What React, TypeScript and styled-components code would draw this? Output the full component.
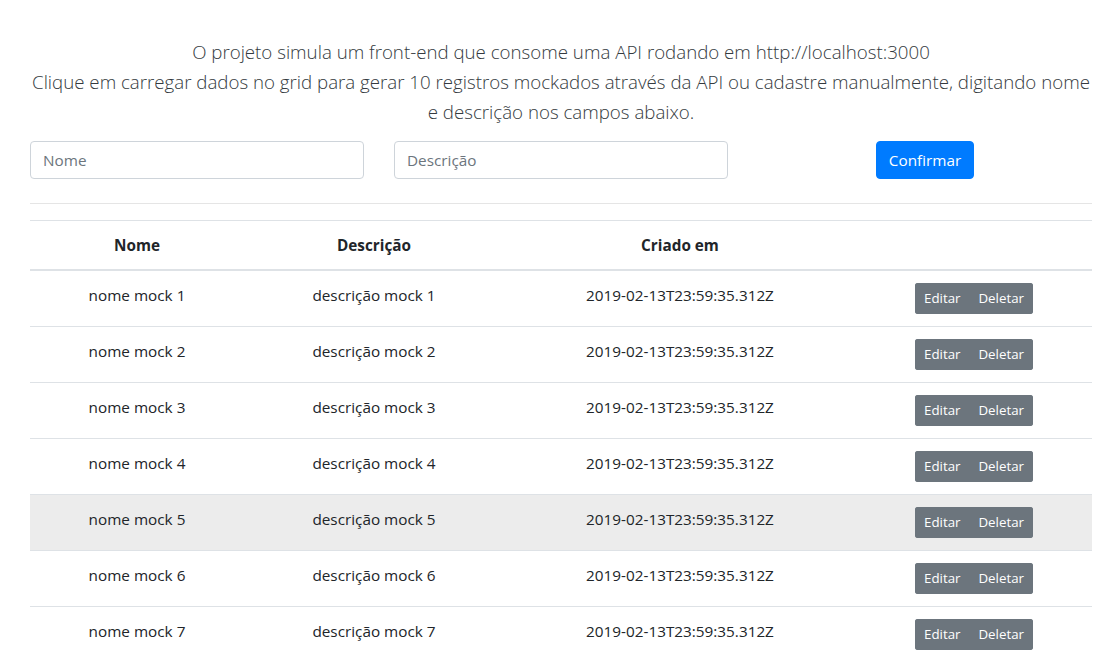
import React from "react";
import styled, { createGlobalStyle } from "styled-components";

const GlobalStyle = createGlobalStyle`
  html, body { margin: 0; padding: 0; background: #fff; }
  body {
    font-family: "Open Sans", "Noto Sans", sans-serif;
    font-size: 15.3px;
    line-height: 24px;
    color: #212529;
  }
  * { box-sizing: border-box; }
`;

const Page = styled.div`
  width: 1062px;
  margin-left: 30px;
  padding-top: 37px;
`;

const Lead = styled.p`
  margin: 0 0 14px;
  font-size: 18.7px;
  font-weight: 300;
  line-height: 30px;
  text-align: center;
  color: #343a40;
`;

const FormRow = styled.div`
  display: grid;
  grid-template-columns: 334px 334px 334px;
  column-gap: 30px;
  align-items: center;
`;

const Input = styled.input`
  height: 38px;
  width: 100%;
  padding: 6px 12px;
  font-family: inherit;
  font-size: 15.3px;
  color: #495057;
  border: 1px solid #ced4da;
  border-radius: 4px;
  outline: none;
  &::placeholder { color: #6c757d; }
`;

const ButtonCell = styled.div`
  display: flex;
  justify-content: center;
`;

const PrimaryButton = styled.button`
  height: 38px;
  padding: 6px 12px;
  font-family: inherit;
  font-size: 15.3px;
  color: #fff;
  background: #007bff;
  border: 1px solid #007bff;
  border-radius: 4px;
`;

const Rule = styled.hr`
  margin: 24px 0 16px;
  border: 0;
  border-top: 1px solid rgba(0, 0, 0, 0.1);
`;

const Table = styled.table`
  width: 100%;
  border-collapse: collapse;
  table-layout: fixed;
`;

const Th = styled.th<{ $w: number }>`
  width: ${(p) => p.$w}px;
  padding: 12px;
  font-weight: 700;
  text-align: center;
  border-top: 1px solid #dee2e6;
  border-bottom: 2px solid #dee2e6;
  vertical-align: bottom;
`;

const Tr = styled.tr<{ $hover?: boolean }>`
  background: ${(p) => (p.$hover ? "rgba(0,0,0,0.075)" : "transparent")};
`;

const Td = styled.td`
  padding: 12px;
  height: 56px;
  text-align: center;
  vertical-align: top;
  border-top: 1px solid #dee2e6;
`;

const BtnGroup = styled.div`
  display: inline-flex;
  border-radius: 3px;
  overflow: hidden;
`;

const SmallButton = styled.button`
  height: 31px;
  padding: 4px 8px;
  font-family: inherit;
  font-size: 13.3px;
  line-height: 21px;
  color: #fff;
  background: #6c757d;
  border: 1px solid #6c757d;
`;

const rows = [1, 2, 3, 4, 5, 6, 7];

export default function App() {
  return (
    <>
      <GlobalStyle />
      <Page>
        <Lead>
          O projeto simula um front-end que consome uma API rodando em http://localhost:3000
          <br />
          Clique em carregar dados no grid para gerar 10 registros mockados através da API ou cadastre manualmente, digitando nome e descrição nos campos abaixo.
        </Lead>
        <FormRow>
          <Input placeholder="Nome" />
          <Input placeholder="Descrição" />
          <ButtonCell>
            <PrimaryButton>Confirmar</PrimaryButton>
          </ButtonCell>
        </FormRow>
        <Rule />
        <Table>
          <thead>
            <tr>
              <Th $w={214}>Nome</Th>
              <Th $w={260}>Descrição</Th>
              <Th $w={352}>Criado em</Th>
              <Th $w={236}></Th>
            </tr>
          </thead>
          <tbody>
            {rows.map((n) => (
              <Tr key={n} $hover={n === 5}>
                <Td>nome mock {n}</Td>
                <Td>descrição mock {n}</Td>
                <Td>2019-02-13T23:59:35.312Z</Td>
                <Td>
                  <BtnGroup>
                    <SmallButton>Editar</SmallButton>
                    <SmallButton>Deletar</SmallButton>
                  </BtnGroup>
                </Td>
              </Tr>
            ))}
          </tbody>
        </Table>
      </Page>
    </>
  );
}
